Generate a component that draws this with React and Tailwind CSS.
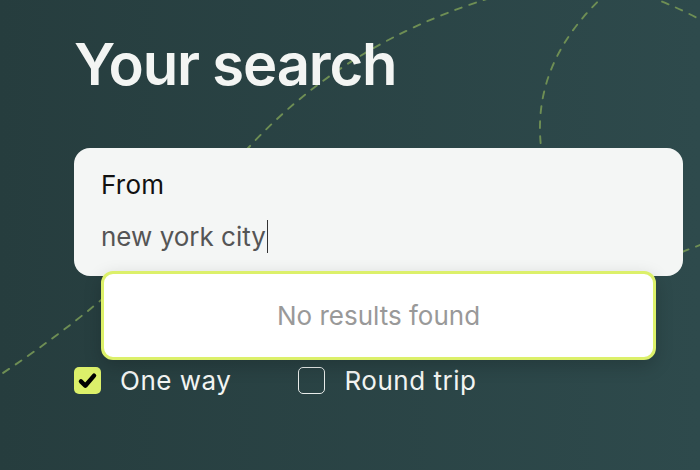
import { useState } from "react";

const FONT = { fontFamily: "Inter, 'Noto Sans', sans-serif" };

function Dashes() {
  return (
    <svg className="absolute inset-0 h-full w-full pointer-events-none" viewBox="0 0 700 470" fill="none">
      <g stroke="#6e8e54" strokeWidth="1.9" strokeDasharray="7 8" strokeLinecap="round">
        <path d="M490 -2 C420 20 330 60 250 146 C190 210 150 275 0 375" />
        <path d="M608 -8 C560 35 530 90 543 160" />
        <path d="M648 -4 Q680 8 708 24" />
        <path d="M682 252 L708 242" />
      </g>
    </svg>
  );
}

function Check({ checked, label, onClick }) {
  return (
    <button onClick={onClick} className="flex items-center gap-[19px]">
      {checked ? (
        <span className="flex h-[27px] w-[27px] items-center justify-center rounded-[5px] bg-[#dcf06a]">
          <svg viewBox="0 0 24 24" className="h-[21px] w-[21px]" fill="none" stroke="#000" strokeWidth="5" strokeLinecap="round" strokeLinejoin="round">
            <path d="M4.5 13 L9.5 18 L19.5 6.5" />
          </svg>
        </span>
      ) : (
        <span className="h-[27px] w-[27px] rounded-[5px] border-[1.5px] border-[#e8ecea]" />
      )}
      <span className="text-[26px] leading-none tracking-[0.02em] text-[#f3f5f3]">{label}</span>
    </button>
  );
}

export default function App() {
  const [oneWay, setOneWay] = useState(true);

  return (
    <div style={FONT} className="relative h-[470px] w-[700px] overflow-hidden bg-gradient-to-r from-[#263d3e] to-[#2e4a4c]">
      <Dashes />
      <div className="relative pl-[74px] pt-[35px]">
        <h1 className="text-[58px] font-semibold leading-none tracking-[-0.02em] text-[#f3f5f3]">Your search</h1>

        {/* From field */}
        <div className="relative mt-[55px] w-[609px]">
          <div className="h-[128px] rounded-2xl bg-[#f4f6f5] px-[27px] pt-[24px]">
            <p className="text-[26px] leading-none tracking-[0.01em] text-[#111]">From</p>
            <div className="mt-[22px] flex items-center">
              <span className="text-[26px] leading-none text-[#555]">new york city</span>
              <span className="ml-[1px] h-[33px] w-[1.5px] bg-[#333]" />
            </div>
          </div>

          {/* Suggestions dropdown */}
          <div className="absolute left-[27px] top-[123px] flex h-[89px] w-[555px] items-center justify-center rounded-xl border-[3px] border-[#dcf06a] bg-white shadow-[0_6px_18px_rgba(0,0,0,0.18)]">
            <span className="text-[26px] text-[#999]">No results found</span>
          </div>
        </div>

        {/* Trip type */}
        <div className="mt-[91px] flex items-center gap-[67px]">
          <Check checked={oneWay} label="One way" onClick={() => setOneWay(true)} />
          <Check checked={!oneWay} label="Round trip" onClick={() => setOneWay(false)} />
        </div>
      </div>
    </div>
  );
}
